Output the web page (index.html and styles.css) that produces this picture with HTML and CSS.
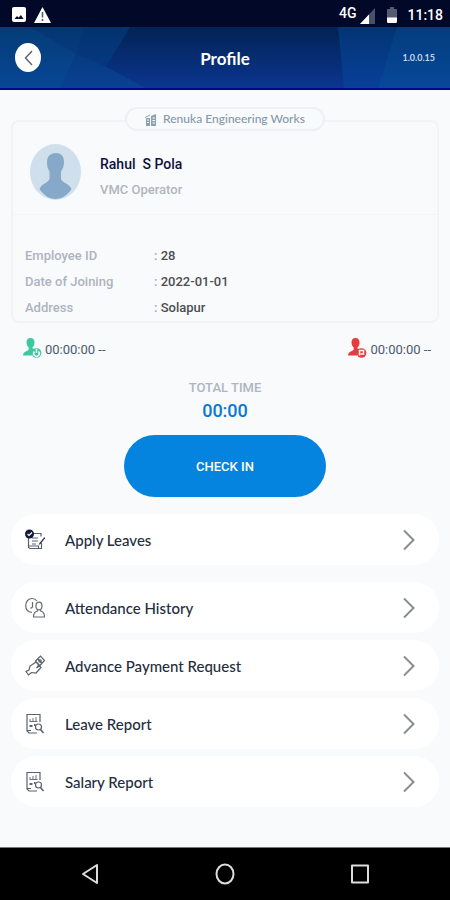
FILE: index.html
```html
<!DOCTYPE html>
<html lang="en">
<head>
<meta charset="utf-8">
<meta name="viewport" content="width=device-width, initial-scale=1">
<title>Profile</title>
<link rel="stylesheet" href="styles.css">
</head>
<body>
<svg class="defs" width="0" height="0" aria-hidden="true">
  <symbol id="chevron" viewBox="0 0 12 22"><path d="M1 1.500 10.500 11 1 20.500" fill="none" stroke="#898d90" stroke-width="2"/></symbol>
  <symbol id="report" viewBox="0 0 20 22">
    <g fill="none" stroke="#5b616a" stroke-width="1.200">
      <path d="M15 9V1.500H2V18l2 2h8M2 17.500h4"/>
      <path d="M5 8V6M8 8V5M11 8V4M4.500 8.500h8" stroke-width=".900"/>
      <path d="M4.500 13h3M9 12h1.500" stroke-width="1.800"/>
      <circle cx="13.500" cy="14" r="3"/>
      <path d="m15.500 16.500 3 3.500" stroke-width="1.600"/>
    </g>
  </symbol>
  <symbol id="person" viewBox="0 0 20 22">
    <path d="M8.500 1C5.700 1 4.500 3 4.500 5.500c0 2.300 1 4 2.200 5v2C5.500 14.500 1 14.500 1 18.500h9c-.500-3 .500-5 3-6.500l-2.500-.500v-1c1.300-1 2-2.700 2-5C12.500 3 11.300 1 8.500 1Z"/>
    <circle cx="14.500" cy="16" r="4.800"/>
  </symbol>
</svg>

<div class="screen">
  <div class="status">
    <div class="status-side">
      <svg width="14" height="15" viewBox="0 0 14 15" role="img" aria-label="Picture"><rect width="14" height="15" rx="2" fill="#fff"/><path d="m2.500 12 2.500-3 1.500 1.500L9 8l2.500 4z" fill="#080e2c"/></svg>
      <svg width="17" height="16" viewBox="0 0 17 16" role="img" aria-label="Warning"><path d="M8.500 0 17 16H0z" fill="#fff"/><path d="M8.500 5v5.500M8.500 12v2" stroke="#555a70" stroke-width="1.600"/></svg>
    </div>
    <div class="status-side">
      <span class="network">4G</span>
      <svg class="signal" width="15" height="16" viewBox="0 0 15 16" aria-hidden="true"><path d="M15 0v16H0z" fill="#4a506a"/><path d="M9 6.400V16H0z" fill="#fff"/></svg>
      <svg class="battery" width="10" height="16" viewBox="0 0 10 16" aria-hidden="true"><path d="M3 0h4v2h3v14H0V2h3z" fill="#555b73"/><path d="M0 10.500h10V15l-1 1H1l-1-1z" fill="#fff"/></svg>
      <span class="clock">11:18</span>
    </div>
  </div>

  <header class="header">
    <svg class="header-art" viewBox="0 0 450 63" preserveAspectRatio="none" aria-hidden="true">
      <defs><linearGradient id="sky" x2="0" y2="1"><stop stop-color="#022354"/><stop offset="1" stop-color="#0b3590"/></linearGradient></defs>
      <path fill="url(#sky)" d="M0 0h450v63H0z"/>
      <path fill="#07539b" opacity=".4" d="M0 0h130l-24 41 40 22H0z"/>
      <path fill="#0567a5" opacity=".14" d="M0 0h30l46 28-16 35H0z"/>
      <path fill="#022b69" opacity=".22" d="m84 0-8 28 30 13L130 0z"/>
      <path fill="#0755ae" opacity=".35" d="M338 0h112v63H344z"/>
      <path fill="#0565a1" opacity=".2" d="M397 0h53v63h-72z"/>
    </svg>
    <button class="back" aria-label="Back"><svg width="9" height="16" viewBox="0 0 9 16"><path d="M8 1 1.500 8 8 15" fill="none" stroke="#62666d" stroke-width="1.500"/></svg></button>
    <h1>Profile</h1>
    <span class="version">1.0.0.15</span>
  </header>

  <main>
    <section class="card">
      <div class="company">
        <svg width="12" height="13" viewBox="0 0 12 13" aria-hidden="true"><path d="M1 5h4v8H1zM6 3l5-2v12H6z" fill="#8ba0b2"/><path d="M2 7h2M2 9.500h2M7.500 5H10M7.500 7.500H10M7.500 10H10" stroke="#f9fafc" fill="none"/><path d="M0 4.500 5 2" stroke="#8ba0b2"/></svg>
        <span>Renuka Engineering Works</span>
      </div>
      <div class="person">
        <svg width="51" height="56" viewBox="0 0 51 56" role="img" aria-label="Profile photo">
          <ellipse cx="25.500" cy="28" rx="25.500" ry="28" fill="#cfe0ec"/>
          <path fill="#87a9c9" d="M26 9c-6 0-9 3.500-9 9 0 4 .5 6.500 2.500 9.500V35c-1.500 4-8 4.500-10 10 4 6 9.500 10 16 10s12-4 16-10c-2-5.500-9-6-10.500-10v-7.500c2-3 3-5.500 3-9.500 0-5.500-2.500-9-8-9Z"/>
        </svg>
        <div>
          <h2>Rahul&nbsp; S Pola</h2>
          <p>VMC Operator</p>
        </div>
      </div>
      <dl class="details">
        <dt>Employee ID</dt><dd>28</dd>
        <dt>Date of Joining</dt><dd>2022-01-01</dd>
        <dt>Address</dt><dd>Solapur</dd>
      </dl>
    </section>

    <div class="times">
      <div class="time">
        <svg class="in" width="20" height="22" aria-hidden="true"><use href="#person"/><path d="M12.500 14.500a2.800 2.800 0 1 0 4 0M14.500 12v4" fill="none" stroke="#f9fafc" stroke-width="1.500"/></svg>
        <span>00:00:00 --</span>
      </div>
      <div class="time">
        <svg class="out" width="20" height="22" aria-hidden="true"><use href="#person"/><path d="M12.500 18.500v-5h4v3.500h-3" fill="none" stroke="#f9fafc" stroke-width="1.500"/></svg>
        <span>00:00:00 --</span>
      </div>
    </div>

    <section class="total">
      <p class="total-label">TOTAL TIME</p>
      <p class="total-value">00:00</p>
      <button class="check-in">CHECK IN</button>
    </section>

    <nav class="menu" aria-label="Profile options">
      <a class="apply" href="#leaves">
        <svg width="20" height="22" viewBox="0 0 20 22" aria-hidden="true"><path d="M8 4.500h8v3M3.500 9v9.500l1.500 1h11.500V14M3.500 17h10v2.500" fill="none" stroke="#596170" stroke-width="1.200"/><path d="M7 9h6M7 12h6M7 15h4" stroke="#596170"/><path d="m19.500 8-5 6-1 2 2-1 5-6z" fill="#30394b"/><circle cx="4.500" cy="5" r="4.500" fill="#111b39"/><path d="m2.500 5 1.500 1.500L7 3.500" fill="none" stroke="#fff" stroke-width="1.200"/></svg>
        <span>Apply Leaves</span><svg class="chevron" width="12" height="22"><use href="#chevron"/></svg></a>
      <a href="#attendance">
        <svg width="20" height="22" viewBox="0 0 20 22" aria-hidden="true"><g fill="none" stroke="#666b72" stroke-width="1.200"><path d="M12 4C10.500 2 9 1.500 7 1.500 3.500 1.500.700 4.500.700 8.500S3 15 7 15.500M7.500 5v5l-2 1.500"/><ellipse cx="14" cy="9" rx="3" ry="3.800"/><path d="M12.500 12.500v1.500c-2.500.500-4 2-4 6h11c0-4-1.500-5.500-4-6v-1.500"/></g></svg>
        <span>Attendance History</span><svg class="chevron" width="12" height="22"><use href="#chevron"/></svg></a>
      <a href="#advance">
        <svg width="20" height="22" viewBox="0 0 20 22" aria-hidden="true"><g fill="none" stroke="#5c6168" stroke-width="1.200"><path d="M1 16.500 3.500 20l3-2.500 4.500.500 5-5.500-1.500-1.500-3 2 2.500-3.500-3-2.500L5 11l-1 4zM1 16.500 4 15"/><path d="m10.500 6 5-5 4 4.500-5 5.500zM13 4l4 4.500"/><circle cx="15" cy="6" r="1.200"/></g></svg>
        <span>Advance Payment Request</span><svg class="chevron" width="12" height="22"><use href="#chevron"/></svg></a>
      <a href="#leave-report">
        <svg width="20" height="22" aria-hidden="true"><use href="#report"/></svg>
        <span>Leave Report</span><svg class="chevron" width="12" height="22"><use href="#chevron"/></svg></a>
      <a href="#salary-report">
        <svg width="20" height="22" aria-hidden="true"><use href="#report"/></svg>
        <span>Salary Report</span><svg class="chevron" width="12" height="22"><use href="#chevron"/></svg></a>
    </nav>
  </main>

  <div class="system">
    <button aria-label="System back"><svg width="22" height="24" viewBox="0 0 22 24"><path d="M18 3v18L4 12z"/></svg></button>
    <button aria-label="Home"><svg width="22" height="24" viewBox="0 0 22 24"><ellipse cx="11" cy="12" rx="8.500" ry="9.500"/></svg></button>
    <button aria-label="Recent apps"><svg width="22" height="24" viewBox="0 0 22 24"><rect x="3" y="3.500" width="16" height="17"/></svg></button>
  </div>
</div>
</body>
</html>
```
FILE: styles.css
```css
* { box-sizing: border-box; }
body, h1, h2, p, dl, dd { margin: 0; }
body { background: #f9fafc; font-family: Roboto, "Liberation Sans", sans-serif; }
button { border: 0; padding: 0; font: inherit; cursor: pointer; }
svg { flex: none; }
.defs { position: absolute; }

.screen { min-height: 100vh; display: flex; flex-direction: column; }

.status {
  height: 27px;
  padding: 2px 7px 0 12px;
  display: flex;
  align-items: center;
  justify-content: space-between;
  background: #020928;
  color: #fff;
}
.status-side { display: flex; align-items: center; gap: 8px; }
.network { align-self: flex-start; font-size: 14px; font-weight: 500; line-height: 14px; }
.signal { margin: 2px 4px 0 -4px; }
.clock { font-size: 14px; font-weight: 500; margin-left: 2px; }

.header {
  position: relative;
  height: 63px;
  padding: 0 15px;
  display: grid;
  grid-template-columns: 1fr auto 1fr;
  align-items: center;
  border-bottom: 2px solid #02068d;
  color: #fff;
}
.header-art { position: absolute; inset: 0; width: 100%; height: 100%; z-index: -1; }
.back {
  width: 26px;
  height: 29px;
  border-radius: 50%;
  background: #fff;
  display: grid;
  place-items: center;
}
h1 { font: 700 17px/24px Lato, sans-serif; padding-top: 2px; }
.version { justify-self: end; font: 700 9px/16px Lato, sans-serif; color: #c7d4ea; }

main { flex: 1; padding: 17px 11px 16px; }

.card {
  margin-top: 13px;
  border: 2px solid #f1f3f5;
  border-radius: 8px;
  display: flex;
  flex-direction: column;
}
.company {
  align-self: center;
  width: 47%;
  min-width: max-content;
  height: 24px;
  margin-top: -15px;
  display: flex;
  align-items: center;
  justify-content: center;
  gap: 6px;
  border: 2px solid #edf1f4;
  border-radius: 12px;
  background: #f9fafc;
  color: #8299aa;
  font: 500 12px/20px Lato, sans-serif;
}
.person {
  display: flex;
  gap: 19px;
  padding: 13px 17px 14px;
  border-bottom: 1px solid #f3f5f7;
}
h2 { margin-top: 10px; font-size: 14px; line-height: 20px; font-weight: 500; color: #0d103f; }
.person p { margin-top: 6px; font-size: 13px; line-height: 20px; font-weight: 500; color: #b0b6bd; }
.details {
  display: grid;
  grid-template-columns: 129px 1fr;
  padding: 28px 12px 0;
  font-size: 13px;
  line-height: 26px;
  font-weight: 500;
  color: #adb4c0;
}
.details dd { color: #4c4e51; }
.details dd::before { content: ": "; color: #a2a8b1; }

.times { display: flex; justify-content: space-between; padding: 14px 8px 0 11px; }
.time { display: flex; align-items: center; gap: 3px; font: 400 13px/26px Roboto, sans-serif; color: #4c596c; }
.in { fill: #3cc8a1; }
.out { fill: #e63c3e; }
.time svg { margin-bottom: 4px; }

.total { display: flex; flex-direction: column; align-items: center; padding-top: 15px; }
.total-label { font-size: 13px; line-height: 20px; font-weight: 500; color: #adb5c1; }
.total-value { font-size: 18px; line-height: 26px; font-weight: 500; color: #0878d1; }
.check-in {
  width: 47%;
  height: 62px;
  margin-top: 11px;
  border-radius: 31px;
  background: #0484df;
  color: #fff;
  font-size: 13px;
  font-weight: 500;
}

.menu { display: flex; flex-direction: column; gap: 7px; margin-top: 17px; }
.menu a {
  height: 51px;
  padding: 0 24px 0 14px;
  display: flex;
  align-items: center;
  gap: 20px;
  border-radius: 25px;
  background: #fff;
  color: #242d3d;
  font: 500 15px/24px Lato, sans-serif;
  text-decoration: none;
}
.menu .apply { margin-bottom: 10px; }
.chevron { margin-left: auto; }

.system {
  height: 53px;
  display: grid;
  grid-template-columns: repeat(3, 30%);
  justify-content: center;
  justify-items: center;
  align-items: center;
  background: #000;
  border-top: 1px solid #777;
}
.system button { display: flex; background: none; }
.system svg { fill: none; stroke: #ddd; stroke-width: 2; stroke-linejoin: round; }
```
